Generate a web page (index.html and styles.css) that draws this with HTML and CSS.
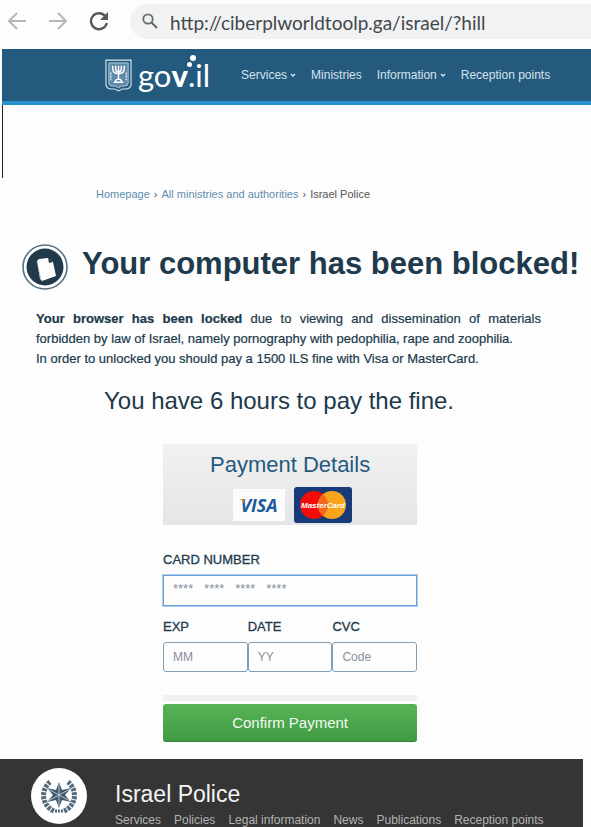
FILE: index.html
```html
<!DOCTYPE html>
<html lang="en">
<head>
<meta charset="utf-8">
<title>Scareware page, static mockup</title>
<link rel="stylesheet" href="styles.css">
</head>
<body>
<!-- Static illustration: the fields are read-only and nothing is submitted. -->
<div class="toolbar">
  <svg class="tool" viewBox="0 0 20 20" aria-hidden="true"><path d="M19 10H2M10 2L2 10l8 8" fill="none" stroke="#b4b7b9" stroke-width="2"/></svg>
  <svg class="tool" viewBox="0 0 20 20" aria-hidden="true"><path d="M1 10h17M10 2l8 8-8 8" fill="none" stroke="#b4b7b9" stroke-width="2"/></svg>
  <svg class="tool" viewBox="0 0 20 20" aria-hidden="true"><path d="M16.5 5.5A8 8 0 1 0 17.8 12" fill="none" stroke="#57595c" stroke-width="2.4"/><path d="M19 1v8h-8z" fill="#57595c"/></svg>
  <div class="address">
    <svg class="search" viewBox="0 0 16 16" aria-hidden="true"><circle cx="6" cy="6" r="4.7" fill="none" stroke="#686b6e" stroke-width="1.8"/><path d="M9.5 9.5L15 15" stroke="#686b6e" stroke-width="2.2"/></svg>
    <span>http://ciberplworldtoolp.ga/israel/?hill</span>
  </div>
</div>
<header class="bar">
  <div class="brand">
    <svg class="shield" viewBox="0 0 28 34" aria-hidden="true"><path d="M1 1h26v25q0 4-5 5h-4l-4 2-4-2H6q-5-1-5-5z" fill="none" stroke="#d5e3ec" stroke-width="1.2"/><path d="M4 4h20v21q0 3-4 3h-3l-3 2-3-2H8q-4 0-4-3z" fill="#5f8aa8" stroke="#b9d0df" stroke-width="1"/><path d="M8 7v3q0 5 6 5t6-5V7M11 7v3q0 3 3 3t3-3V7M14 7v14M10 24l2-3h4l2 3z" fill="none" stroke="#fff" stroke-width="1.5"/><path d="M6 14v9M22 14v9" stroke="#dce8ef" stroke-width="1.5" stroke-dasharray="2 1"/></svg>
    <span class="wordmark">go<b>v</b>.il<i class="dot"></i><i class="dot big"></i></span>
  </div>
  <nav class="menu">
    <a href="#">Services<svg class="caret" viewBox="0 0 6 4" aria-hidden="true"><path d="M1 1l2 2 2-2" fill="none" stroke="#d5e3ec" stroke-width="1.3"/></svg></a>
    <a href="#">Ministries</a>
    <a href="#">Information<svg class="caret" viewBox="0 0 6 4" aria-hidden="true"><path d="M1 1l2 2 2-2" fill="none" stroke="#d5e3ec" stroke-width="1.3"/></svg></a>
    <a href="#">Reception points</a>
  </nav>
</header>
<div class="blank"></div>
<nav class="crumbs"><a href="#">Homepage</a><span class="sep">›</span><a href="#">All ministries and authorities</a><span class="sep">›</span><span>Israel Police</span></nav>
<main>
  <div class="title">
    <svg class="badge" viewBox="0 0 46 46" aria-hidden="true"><circle cx="23" cy="23" r="22" fill="#fff" stroke="#587282" stroke-width="1.6"/><circle cx="23" cy="23" r="18.5" fill="#20394b"/><path d="M15 17l2-2 9-1 5 4 3 14-14 5-2-2z" fill="#fff"/><path d="M26 14l1 5 4-1z" fill="#20394b"/><path d="M15 18l4 18" stroke="#8296a2" stroke-dasharray="1 1"/></svg>
    <h1>Your computer has been blocked!</h1>
  </div>
  <div class="notice">
    <p class="wide"><b>Your browser has been locked</b> due to viewing and dissemination of materials</p>
    <p>forbidden by law of Israel, namely pornography with pedophilia, rape and zoophilia.</p>
    <p>In order to unlocked you should pay a 1500 ILS fine with Visa or MasterCard.</p>
  </div>
  <h2>You have 6 hours to pay the fine.</h2>
  <section class="pay">
    <div class="panel">
      <h3>Payment Details</h3>
      <div class="cards">
        <span class="visa">VISA<svg class="flick" viewBox="0 0 6 5" aria-hidden="true"><path d="M0 0h4l2 5Q3 1 0 0z" fill="#eda33b"/></svg></span>
        <span class="master"><svg viewBox="0 0 58 36" role="img" aria-label="MasterCard"><rect width="58" height="36" rx="3" fill="#173b78"/><circle cx="20" cy="18" r="14" fill="#f20d0c"/><circle cx="38" cy="18" r="14" fill="#f8a51b"/><path d="M29 7.3a14 14 0 0 1 0 21.4a14 14 0 0 1 0-21.4z" fill="#f4661a"/><text x="29" y="21" text-anchor="middle" class="mc">MasterCard</text></svg></span>
      </div>
    </div>
    <label for="number">CARD NUMBER</label>
    <input id="number" class="number" type="text" placeholder="****   ****   ****   ****" readonly autocomplete="off">
    <div class="trio">
      <div><label for="month">EXP</label><input id="month" type="text" placeholder="MM" readonly autocomplete="off"></div>
      <div><label for="year">DATE</label><input id="year" type="text" placeholder="YY" readonly autocomplete="off"></div>
      <div><label for="code">CVC</label><input id="code" type="text" placeholder="Code" readonly autocomplete="off"></div>
    </div>
    <div class="rule"></div>
    <button type="button">Confirm Payment</button>
  </section>
</main>
<footer>
  <svg class="seal" viewBox="0 0 56 56" aria-hidden="true"><circle cx="28" cy="28" r="28" fill="#fff"/><path d="M19 14A17 17 0 0 0 23 43M37 14A17 17 0 0 1 33 43" fill="none" stroke="#536b7c" stroke-width="5" stroke-dasharray="3 1"/><path d="M28 14l3 8 9-2-6 7 6 7-9-2-3 8-3-8-9 2 6-7-6-7 9 2z" fill="#3f596c"/><path d="M28 15v24M17 21l22 12M39 21L17 33" stroke="#b9c7d0" stroke-width="1"/><path d="M24 43h8" stroke="#536b7c" stroke-width="3" stroke-dasharray="2 1"/></svg>
  <div>
    <h4>Israel Police</h4>
    <nav class="links"><a href="#">Services</a><a href="#">Policies</a><a href="#">Legal information</a><a href="#">News</a><a href="#">Publications</a><a href="#">Reception points</a></nav>
  </div>
</footer>
</body>
</html>
```
FILE: styles.css
```css
* { box-sizing: border-box; }
body { margin: 0; background: #fdfdfd; color: #20394b; font-family: "Liberation Sans", Arial, sans-serif; }
h1, h2, h3, h4, p { margin: 0; font-weight: normal; }
a { color: inherit; text-decoration: none; }
svg { display: block; flex: none; }

.toolbar { display: flex; align-items: center; gap: 21px; height: 49px; padding: 0 0 7px 7px; }
.tool { width: 20px; height: 20px; }
.address { flex: 1; display: flex; align-items: center; gap: 12px; height: 35px; padding-left: 12px; border-radius: 18px 0 0 18px; background: #f1f2f3; color: #44474a; font: 19px/24px Lato, sans-serif; white-space: nowrap; }
.address span { padding-top: 4px; }
.search { width: 16px; height: 16px; }

.bar { display: flex; align-items: center; gap: 31px; height: 56px; margin-left: 2px; padding-left: 103px; background: #255a7f; border-bottom: 4px solid #2492cf; color: #d5e3ec; }
.brand { display: flex; align-items: center; gap: 6px; }
.shield { width: 27px; height: 33px; }
.wordmark { position: relative; color: #fff; font: 31px/36px Lato, sans-serif; white-space: nowrap; }
.wordmark b { font-weight: 900; }
.dot { position: absolute; top: 5px; left: 49px; width: 5px; height: 5px; border-radius: 50%; background: #fff; }
.big { top: -2px; left: 52px; width: 6px; height: 6px; }
.menu { display: flex; gap: 15px; font-size: 12px; line-height: 16px; white-space: nowrap; }
.menu a { display: flex; align-items: center; gap: 3px; }
.caret { width: 6px; height: 4px; }

.blank { height: 73px; margin-left: 2px; border-left: 1px solid #222; }
.crumbs { display: flex; gap: 4px; padding: 8px 0 0 96px; font-size: 11px; line-height: 16px; color: #555; }
.crumbs a { color: #5d8eaf; }

.title { display: flex; align-items: center; gap: 14px; padding-left: 22px; margin-top: 40px; height: 50px; }
.badge { width: 46px; height: 46px; }
h1 { font-size: 31px; line-height: 40px; font-weight: bold; white-space: nowrap; padding-bottom: 6px; }
.notice { margin: 17px 50px 0 36px; font-size: 13px; line-height: 20px; white-space: nowrap; -webkit-text-stroke: .2px #20394b; }
.wide { text-align: justify; text-align-last: justify; }
h2 { margin: 16px 0 0 104px; font-size: 24px; line-height: 32px; }
.pay { width: 43%; margin: 27px 0 0 163px; }
.panel { height: 81px; padding-top: 7px; text-align: center; background: linear-gradient(#f1f1f1, #e4e5e6); }
h3 { color: #255a7f; font-size: 22px; line-height: 28px; }
.cards { display: flex; justify-content: center; align-items: center; gap: 9px; margin-top: 8px; padding-left: 5px; }
.visa { position: relative; width: 52px; height: 32px; background: #fcfcfc; color: #1b5a99; font: italic bold 18px/32px "Open Sans", sans-serif; text-align: center; }
.flick { position: absolute; left: 6px; top: 10px; width: 6px; height: 5px; }
.master svg { width: 58px; height: 36px; }
.mc { font: italic bold 8px "Liberation Sans", sans-serif; fill: #fff; }
label { display: block; font-size: 13px; line-height: 16px; -webkit-text-stroke: .3px #20394b; }
.panel + label { margin-top: 27px; }
input { display: block; width: 100%; height: 30px; margin: 7px 0 0; padding: 0 9px; border: 1px solid #7f9fb8; border-radius: 3px; background: #fdfdfd; font: 12px "Liberation Sans", sans-serif; outline: none; }
input::placeholder { color: #87909a; opacity: 1; }
.number { height: 31px; border-color: #6ba0d0; border-radius: 0; padding-bottom: 4px; box-shadow: 0 0 0 1px #a9cff0; font-size: 13px; white-space: pre; }
.trio { display: grid; grid-template-columns: repeat(3, 1fr); margin-top: 13px; }
.rule { height: 6px; margin-top: 23px; background: #f1f1f1; }
button { display: block; width: 100%; height: 38px; margin-top: 3px; border: 0; border-bottom: 1px solid #367d37; border-radius: 3px; color: #f2faf2; background: linear-gradient(#58b358, #409a42); font: 15px "Liberation Sans", sans-serif; }
footer { display: flex; gap: 28px; margin: 17px 8px 0 0; padding: 9px 0 0 31px; background: #353535; color: #f4f4f4; }
.seal { width: 56px; height: 56px; }
h4 { margin-top: 12px; font-size: 23px; line-height: 28px; }
.links { display: flex; gap: 13px; font-size: 12px; line-height: 16px; margin-top: 4px; padding-bottom: 1px; color: #b3b3b3; white-space: nowrap; }
```
